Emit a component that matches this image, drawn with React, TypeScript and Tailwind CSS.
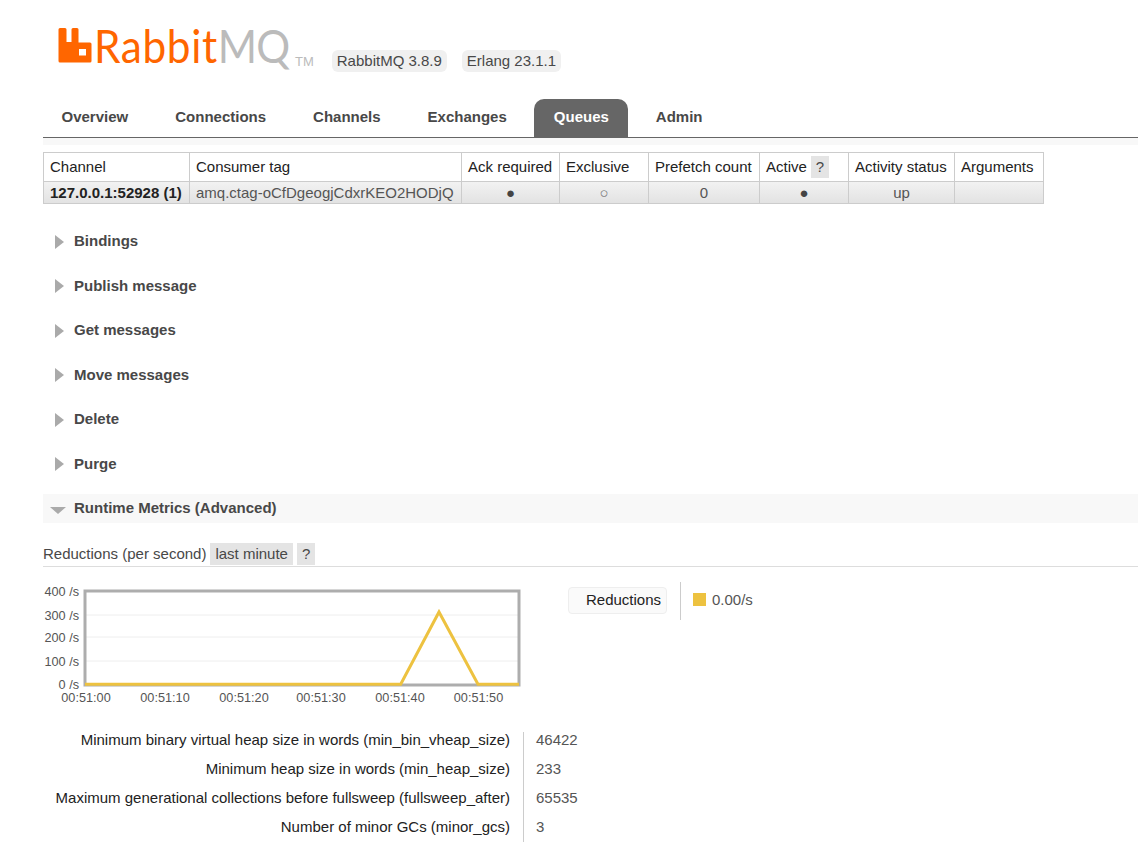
import React from 'react';

const sections = ['Bindings', 'Publish message', 'Get messages', 'Move messages', 'Delete', 'Purge'];
const tabs = ['Overview', 'Connections', 'Channels', 'Exchanges', 'Queues', 'Admin'];
const columns = [146, 272, 98, 89, 111, 89, 106, 89];
const facts = [
  ['Minimum binary virtual heap size in words (min_bin_vheap_size)', '46422'],
  ['Minimum heap size in words (min_heap_size)', '233'],
  ['Maximum generational collections before fullsweep (fullsweep_after)', '65535'],
  ['Number of minor GCs (minor_gcs)', '3'],
];

function Logo() {
  return (
    <div className="flex items-start">
      <svg width="34" height="36" viewBox="0 0 34 36" className="shrink-0">
        <path
          fillRule="evenodd"
          fill="#ff6600"
          d="M2 0h5a1.500 1.500 0 0 1 1.500 1.500V14h5V1.500A1.500 1.500 0 0 1 15 0h4a1.500 1.500 0 0 1 1.500 1.500V14.500H32a1.500 1.500 0 0 1 1.500 1.500V33a1.500 1.500 0 0 1-1.500 1.500H2A1.500 1.500 0 0 1 .5 33V1.500A1.500 1.500 0 0 1 2 0ZM21 21v6.500h7V21Z"
        />
      </svg>
      <div className="ml-[2px] mt-[-12px] w-[199px] shrink-0">
        <span className="inline-block origin-left scale-x-[0.92] whitespace-nowrap text-[46px] leading-[60px] font-['Lato',sans-serif]">
          <span className="tracking-[0.7px] text-[#ff6600]">Rabbit</span>
          <span className="tracking-[-1px] text-[#bbbbbb]">MQ</span>
        </span>
      </div>
      <span className="ml-[2px] mt-[27px] text-[13px] leading-[14px] text-[#bbbbbb]">TM</span>
    </div>
  );
}

function Help() {
  return <span className="ml-[4px] inline-block bg-[#e4e4e4] px-[5px] leading-[22px] text-[#484848]">?</span>;
}

function ConsumerTable() {
  return (
    <table className="mt-[7px] table-fixed border-collapse text-[15px] leading-[20px] w-[1001px]">
      <colgroup>
        {columns.map((w, i) => (
          <col key={i} span={1} style={{ width: w }} />
        ))}
      </colgroup>
      <thead>
        <tr className="h-[29px] text-[#222222]">
          {['Channel', 'Consumer tag', 'Ack required', 'Exclusive', 'Prefetch count'].map((h) => (
            <th key={h} className="border border-[#cccccc] px-[6px] text-left font-normal whitespace-nowrap">{h}</th>
          ))}
          <th className="border border-[#cccccc] px-[6px] text-left font-normal whitespace-nowrap">
            Active<Help />
          </th>
          {['Activity status', 'Arguments'].map((h) => (
            <th key={h} className="border border-[#cccccc] px-[6px] text-left font-normal whitespace-nowrap">{h}</th>
          ))}
        </tr>
      </thead>
      <tbody>
        <tr className="h-[22px] bg-gradient-to-b from-[#f2f2f2] to-[#e2e2e2] leading-[19px] text-[#555555]">
          <td className="border border-[#cccccc] px-[6px] font-bold text-[#222222] whitespace-nowrap">127.0.0.1:52928 (1)</td>
          <td className="border border-[#cccccc] px-[6px] whitespace-nowrap">amq.ctag-oCfDgeogjCdxrKEO2HODjQ</td>
          <td className="border border-[#cccccc] p-0 text-center text-[#444444]"><span className="block h-[20px] overflow-hidden">●</span></td>
          <td className="border border-[#cccccc] p-0 text-center text-[#777777]"><span className="block h-[20px] overflow-hidden">○</span></td>
          <td className="border border-[#cccccc] text-center">0</td>
          <td className="border border-[#cccccc] p-0 text-center text-[#444444]"><span className="block h-[20px] overflow-hidden">●</span></td>
          <td className="border border-[#cccccc] text-center">up</td>
          <td className="border border-[#cccccc]"></td>
        </tr>
      </tbody>
    </table>
  );
}

function Chart() {
  const yLabels: [string, number][] = [['400 /s', 591], ['300 /s', 615], ['200 /s', 637], ['100 /s', 661], ['0 /s', 684]];
  const xLabels: [string, number][] = [['00:51:00', 86], ['00:51:10', 165], ['00:51:20', 244], ['00:51:30', 321], ['00:51:40', 400], ['00:51:50', 478.500]];
  return (
    <svg width="480" height="124" viewBox="43 582 480 124" className="block shrink-0" fontFamily="'Liberation Sans', sans-serif" fontSize="12.700" fill="#555555">
      {[615, 637, 661].map((y) => (
        <line key={y} x1="85" x2="519" y1={y} y2={y} stroke="#eeeeee" strokeWidth="1" />
      ))}
      <rect x="85" y="591" width="434" height="94" fill="none" stroke="#adadad" strokeWidth="3" />
      <polyline points="85,684.300 400.700,684.300 439,612 478,684.300 519,684.300" fill="none" stroke="#edc240" strokeWidth="3" />
      {yLabels.map(([t, y]) => (
        <text key={t} x="79" y={y + 4.500} textAnchor="end">{t}</text>
      ))}
      {xLabels.map(([t, x]) => (
        <text key={t} x={x} y="702" textAnchor="middle">{t}</text>
      ))}
    </svg>
  );
}

export default function App() {
  return (
    <div className="h-[843px] w-[1138px] overflow-hidden bg-white pl-[43px] font-['Liberation_Sans',Arial,sans-serif] text-[15px] text-[#484848]">
      <header className="flex h-[99px] items-start pl-[15px] pt-[28px]">
        <Logo />
        <div className="ml-[18px] mt-[22px] flex gap-[15px] text-[#484848]">
          <span className="rounded-[6px] bg-[#f0f0f0] px-[5px] leading-[22px]">RabbitMQ 3.8.9</span>
          <span className="rounded-[6px] bg-[#f0f0f0] px-[5px] leading-[22px]">Erlang 23.1.1</span>
        </div>
      </header>

      <nav className="flex h-[39px] gap-[8px] border-b border-[#666666]">
        {tabs.map((t) => (
          <span
            key={t}
            className={
              t === 'Queues'
                ? 'rounded-t-[10px] bg-[#666666] px-[19.500px] text-[15px] font-bold leading-[36px] text-white'
                : 'first:-ml-[1px] px-[19.500px] text-[15px] font-bold leading-[36px] text-[#484848]'
            }
          >
            {t}
          </span>
        ))}
      </nav>
      <div className="h-[7px] bg-[#f8f8f8]"></div>

      <ConsumerTable />

      <div className="mt-[23px]">
        {sections.map((s) => (
          <div key={s} className="mb-[15.500px] flex h-[29px] items-center">
            <span className="ml-[12px] h-0 w-0 border-y-[7px] border-l-[9px] border-y-transparent border-l-[#aaaaaa]"></span>
            <h2 className="ml-[10px] text-[15px] font-bold text-[#484848]">{s}</h2>
          </div>
        ))}
        <div className="flex h-[29px] items-center bg-[#f8f8f8]">
          <span className="ml-[7px] mt-[4px] h-0 w-0 border-x-[8px] border-t-[7px] border-x-transparent border-t-[#aaaaaa]"></span>
          <h2 className="ml-[8px] text-[15px] font-bold text-[#484848]">Runtime Metrics (Advanced)</h2>
        </div>
      </div>

      <div className="mt-[19.500px] flex h-[24px] items-center border-b border-[#dddddd] pb-[1px]">
        <span className="leading-[22px] text-[#484848]">Reductions (per second)</span>
        <span className="ml-[4px] bg-[#e4e4e4] px-[5px] leading-[22px]">last minute</span>
        <Help />
      </div>

      <div className="mt-[15px] flex items-start">
        <Chart />
        <div className="ml-[45px] mt-[5px] flex h-[27px] w-[99px] items-center justify-end rounded-[4px] border border-[#eeeeee] bg-[#fafafa] pr-[5px] text-[#222222]">
          Reductions
        </div>
        <div className="ml-[13px] h-[38px] w-px bg-[#cccccc]"></div>
        <div className="ml-[12px] mt-[9px] flex items-center text-[#555555]">
          <span className="h-[13px] w-[13px] bg-[#edc240]"></span>
          <span className="ml-[6px] leading-[18px]">0.00/s</span>
        </div>
      </div>

      <div className="mt-[26px] grid grid-cols-[481px_auto] grid-rows-[23px_29px_29px_29px] justify-start">
        {facts.map(([label, value], i) => (
          <React.Fragment key={label}>
            <div
              className={
                i === 0
                  ? 'flex items-start justify-end border-r border-[#cccccc] pr-[13px] leading-[16px] whitespace-nowrap text-[#222222]'
                  : 'flex items-center justify-end border-r border-[#cccccc] pr-[13px] whitespace-nowrap text-[#222222]'
              }
            >
              <span>{label}</span>
            </div>
            <div className={i === 0 ? 'flex items-start pl-[12px] leading-[16px] text-[#555555]' : 'flex items-center pl-[12px] text-[#555555]'}>{value}</div>
          </React.Fragment>
        ))}
      </div>
    </div>
  );
}
